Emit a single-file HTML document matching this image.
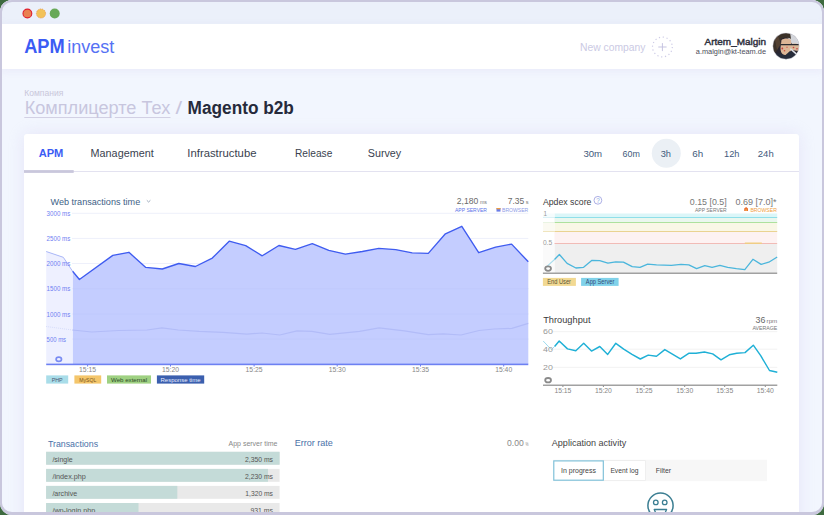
<!DOCTYPE html>
<html><head><meta charset="utf-8">
<style>
html,body{margin:0;padding:0;}
body{width:824px;height:515px;overflow:hidden;background:#3d6a3f;position:relative;font-family:"Liberation Sans", sans-serif;}
#win{position:absolute;left:0;top:0;width:824px;height:515px;border-radius:12px;overflow:hidden;background:#f2f6fe;}
#frame{position:absolute;left:0;top:0;width:824px;height:515px;box-sizing:border-box;border:2px solid #c9c7dd;border-bottom-width:3px;border-radius:12px;}
.abs{position:absolute;}
svg{position:absolute;left:0;top:0;}
svg text{font-family:"Liberation Sans", sans-serif;}
</style></head><body>
<div id="win">
  <div class="abs" style="left:0;top:0;width:824px;height:24px;background:#ebf0fa;"></div>
  <div class="abs" style="left:0;top:24px;width:824px;height:45px;background:#fff;box-shadow:0 2px 8px rgba(212,204,236,.28);"></div>
  <div class="abs" style="left:24px;top:134px;width:775px;height:400px;background:#fff;border-radius:3px;box-shadow:0 0 16px rgba(212,204,238,.42);"></div>
  <svg width="824" height="515" viewBox="0 0 824 515">
<circle cx="27.4" cy="13.5" r="4.4" fill="#e98050" stroke="#e01e2c" stroke-width="1.1"/>
<circle cx="41" cy="13.5" r="4.6" fill="#f2c258" stroke="#e98a3a" stroke-width="0.8" stroke-dasharray="1 1.2"/>
<circle cx="54.7" cy="13.5" r="5" fill="#68a957"/>
<circle cx="662.4" cy="47" r="9.9" fill="none" stroke="#cdcbe6" stroke-width="1.2" stroke-dasharray="1.2 2.69"/>
<path d="M662.4 43.1V51.1M658.3 47H666.6" stroke="#c3c1df" stroke-width="0.95"/>
<defs><clipPath id="av"><circle cx="786" cy="46.1" r="13.1"/></clipPath></defs>
<g clip-path="url(#av)"><rect x="772" y="32" width="28" height="28" fill="#2a2630"/><path d="M786 32H800V46L792 44L788 38Z" fill="#d3d5da"/><path d="M772 32H790L791 39C788 37 784 37 781 39L779 46L776 52L772 54Z" fill="#3b3128"/><path d="M775 40L778 36L781 44L777 50Z" fill="#5a4634" opacity="0.8"/><path d="M781.5 40C784 38 789 38 791 40L791.5 48C791 53 788 55 785 55C782 55 780.5 52 780.5 48Z" fill="#dcb596"/><path d="M790 44.5C793 43 797 43 799.5 45V50.5C796 51 792 50.5 790 49Z" fill="#d9b898"/><path d="M780.5 44.6H799" stroke="#2b2b30" stroke-width="1.1"/><circle cx="782.3" cy="48.5" r="0.9" fill="#c84040"/><circle cx="784.5" cy="50.8" r="0.8" fill="#c85040"/><circle cx="793.5" cy="47.5" r="0.8" fill="#c84040"/><circle cx="797" cy="48.8" r="0.8" fill="#c84040"/><circle cx="787" cy="47.2" r="0.7" fill="#d06050"/><path d="M772 60V55C776 52 781 53 785 55.5L790 51L799 55V60Z" fill="#262b3a"/><path d="M790.3 48.8L796.8 54.4" stroke="#dfe2ea" stroke-width="1.5"/></g>
<circle cx="786" cy="46.1" r="13.3" fill="none" stroke="#e6e6ee" stroke-width="0.6"/>
<path d="M24.3 117.5H111.3M114.8 117.5H170.5" stroke="#d2d0e4" stroke-width="1"/>
<rect x="24" y="171" width="775" height="1" fill="#e3e2f0"/>
<rect x="24" y="170.1" width="49.7" height="2.8" fill="#c9c7dc"/>
<circle cx="666.3" cy="153.3" r="14.5" fill="#ebf0f5"/>
<path d="M72 213.3H528.3" stroke="#eef0fb" stroke-width="1"/>
<path d="M72 238.4H528.3" stroke="#eef0fb" stroke-width="1"/>
<path d="M72 263.5H528.3" stroke="#eef0fb" stroke-width="1"/>
<path d="M72 288.7H528.3" stroke="#eef0fb" stroke-width="1"/>
<path d="M72 314.0H528.3" stroke="#eef0fb" stroke-width="1"/>
<path d="M72 339.1H528.3" stroke="#eef0fb" stroke-width="1"/>
<polygon points="72.6,271.3 79.4,279.5 112.8,255.4 128.9,252.3 145.8,267.4 162.3,269.0 178.8,263.5 195.4,266.5 212.3,258.1 229.2,241.2 245.7,245.7 262.2,255.8 278.9,245.5 295.4,249.4 312.3,243.7 328.8,250.3 345.4,254.2 362.3,251.5 378.8,248.4 395.7,249.6 412.2,252.9 428.3,253.4 445.4,233.8 461.8,226.3 478.7,252.7 495.6,247.1 511.6,244.1 528.3,261.8 528.3,364.0 72.6,364.0" fill="#c4cdff"/>
<polygon points="46.2,251.5 63.3,257.3 72.6,271.3 72.6,364.0 46.2,364.0" fill="#eef0ff"/>
<polyline points="46.2,251.5 63.3,257.3 72.6,271.3" fill="none" stroke="#a9b6f7" stroke-width="1"/>
<path d="M72.6 288.7H528.3" stroke="#b8c2fa" stroke-width="0.8" opacity="0.35"/>
<path d="M72.6 314.0H528.3" stroke="#b8c2fa" stroke-width="0.8" opacity="0.35"/>
<path d="M72.6 339.1H528.3" stroke="#b8c2fa" stroke-width="0.8" opacity="0.35"/>
<polyline points="72.6,271.3 79.4,279.5 112.8,255.4 128.9,252.3 145.8,267.4 162.3,269.0 178.8,263.5 195.4,266.5 212.3,258.1 229.2,241.2 245.7,245.7 262.2,255.8 278.9,245.5 295.4,249.4 312.3,243.7 328.8,250.3 345.4,254.2 362.3,251.5 378.8,248.4 395.7,249.6 412.2,252.9 428.3,253.4 445.4,233.8 461.8,226.3 478.7,252.7 495.6,247.1 511.6,244.1 528.3,261.8" fill="none" stroke="#3f5cf0" stroke-width="1.35" stroke-linejoin="round"/>
<polyline points="46.2,326.5 72.4,330.0" fill="none" stroke="#d6dcfb" stroke-width="1" stroke-dasharray="1 1"/>
<polyline points="72.4,330.0 91.8,332.0 118.6,330.5 147.0,330.0 162.0,327.9 178.3,330.0 199.2,331.4 223.0,332.3 247.0,334.1 262.0,333.0 279.8,335.0 297.0,330.8 311.9,331.4 329.8,334.4 359.6,331.4 379.0,327.8 404.4,330.8 428.3,334.7 443.2,333.8 461.1,335.0 479.0,330.5 494.0,329.0 511.9,328.4 528.3,323.4" fill="none" stroke="#b2bcf8" stroke-width="1.2"/>
<rect x="46.2" y="363.6" width="482.1" height="1.6" fill="#6d80f2"/>
<rect x="87.1" y="365" width="1" height="1.5" fill="#6d80f2"/>
<rect x="170.0" y="365" width="1" height="1.5" fill="#6d80f2"/>
<rect x="253.6" y="365" width="1" height="1.5" fill="#6d80f2"/>
<rect x="336.7" y="365" width="1" height="1.5" fill="#6d80f2"/>
<rect x="420.0" y="365" width="1" height="1.5" fill="#6d80f2"/>
<rect x="503.2" y="365" width="1" height="1.5" fill="#6d80f2"/>
<ellipse cx="58.8" cy="359.3" rx="2.7" ry="2.1" fill="none" stroke="#7a8cf2" stroke-width="1.7"/>
<rect x="46.2" y="375.4" width="22" height="8.2" fill="#a9dde9"/>
<rect x="74.4" y="375.4" width="26.8" height="8.2" fill="#f4c66b"/>
<rect x="107" y="375.4" width="44" height="8.2" fill="#9fd182"/>
<rect x="156.9" y="375.4" width="47.3" height="8.2" fill="#3b5fae"/>
<rect x="496.5" y="208" width="4" height="3.6" fill="#6a7de8"/><rect x="496.5" y="208" width="4" height="1.3" fill="#f0a040"/>
<path d="M146.8 200.3L148.6 202L150.4 200.3" fill="none" stroke="#8797ac" stroke-width="0.8"/>
<rect x="554.5" y="213.5" width="222.7" height="3.7" fill="#dbf6f8"/>
<rect x="554.5" y="217.1" width="222.7" height="0.9" fill="#78d8e6"/>
<rect x="554.5" y="217.9" width="222.7" height="4.3" fill="#eaf7ee"/>
<rect x="554.5" y="222.1" width="222.7" height="0.9" fill="#8fd77e"/>
<rect x="554.5" y="222.8" width="222.7" height="8.6" fill="#f9f7e6"/>
<rect x="554.5" y="231.1" width="222.7" height="0.9" fill="#e3c66a"/>
<rect x="554.5" y="231.8" width="222.7" height="11.3" fill="#fdf2f2"/>
<rect x="554.5" y="243.1" width="222.7" height="0.9" fill="#f0b4ae"/>
<rect x="554.5" y="244" width="222.7" height="28.8" fill="#efefef"/>
<rect x="543" y="213.5" width="11.5" height="3.6" fill="#f5fcfd"/>
<rect x="543" y="217.1" width="11.5" height="0.9" fill="#d6f0f5"/>
<rect x="543" y="222.1" width="11.5" height="0.9" fill="#e2f2dc"/>
<rect x="543" y="231.1" width="11.5" height="0.9" fill="#eee0b0"/>
<rect x="543" y="222.8" width="11.5" height="8.3" fill="#fbfaf2"/>
<rect x="543" y="244" width="11.5" height="28.7" fill="#fafafa"/>
<rect x="744.8" y="242.5" width="17" height="1.4" fill="#f0cf80"/>
<rect x="542.9" y="272.6" width="234.3" height="1.2" fill="#8a8a8a"/>
<polyline points="546.7,266.7 554.5,259.5" fill="none" stroke="#a8dcec" stroke-width="1.1"/>
<polyline points="554.5,259.5 559.4,254.5 567.1,263.4 575.9,268.0 583.6,267.3 592.0,260.3 599.7,260.7 607.9,263.2 615.7,261.8 623.4,262.2 632.2,266.7 640.0,267.3 647.7,264.2 656.5,264.8 671.4,265.3 681.0,264.4 688.8,264.8 696.6,268.6 704.8,265.7 712.1,267.3 719.9,265.3 727.7,267.3 736.4,268.6 744.8,269.6 752.9,259.3 761.1,264.4 768.8,262.2 777.2,257.0" fill="none" stroke="#4bb6dc" stroke-width="1.3" stroke-linejoin="round"/>
<ellipse cx="548.1" cy="268.6" rx="2.9" ry="2.2" fill="none" stroke="#8a8a8a" stroke-width="1.8"/>
<rect x="542.9" y="277.9" width="33" height="8" fill="#f2d992"/>
<rect x="581.1" y="277.9" width="37.5" height="8" fill="#80d2ea"/>
<circle cx="597.9" cy="200.3" r="3.9" fill="none" stroke="#a3a6e2" stroke-width="0.9"/>
<path d="M744.2 208.6L746.1 206.9L748 208.6V210.9H744.2Z" fill="#ec7034"/><rect x="745.5" y="209.3" width="1.2" height="1.6" fill="#f5c050"/>
<path d="M553 331.7H777.3" stroke="#f2f2f2" stroke-width="1"/>
<path d="M553 349.2H777.3" stroke="#f2f2f2" stroke-width="1"/>
<path d="M553 367.3H777.3" stroke="#f2f2f2" stroke-width="1"/>
<rect x="543" y="384.6" width="234.3" height="1.2" fill="#8a8a8a"/>
<rect x="562.4" y="385.5" width="1" height="1.5" fill="#8a8a8a"/>
<rect x="602.9" y="385.5" width="1" height="1.5" fill="#8a8a8a"/>
<rect x="643.5" y="385.5" width="1" height="1.5" fill="#8a8a8a"/>
<rect x="684.2" y="385.5" width="1" height="1.5" fill="#8a8a8a"/>
<rect x="724.2" y="385.5" width="1" height="1.5" fill="#8a8a8a"/>
<rect x="764.8" y="385.5" width="1" height="1.5" fill="#8a8a8a"/>
<ellipse cx="548.1" cy="380.2" rx="2.9" ry="2.2" fill="none" stroke="#8a8a8a" stroke-width="1.8"/>
<polyline points="543.2,341.0 551.3,349.6 554.6,346.5" fill="none" stroke="#9fdcef" stroke-width="1"/>
<polyline points="554.6,346.5 559.2,341.0 567.5,348.9 575.8,350.7 583.7,343.3 591.5,351.1 599.8,346.5 607.7,354.4 615.8,343.3 623.7,349.2 632.0,354.4 640.3,359.0 648.2,355.1 656.5,356.3 664.8,349.6 680.4,358.9 688.7,353.3 696.1,353.3 704.4,352.0 712.7,353.9 721.0,359.8 729.3,354.8 736.7,353.3 745.0,352.6 753.3,345.2 760.7,355.7 769.5,370.5 777.3,372.3" fill="none" stroke="#1fb0d6" stroke-width="1.45" stroke-linejoin="round"/>
<rect x="46.1" y="451.8" width="233.5" height="12.9" fill="#e9e9e9"/>
<rect x="46.1" y="451.8" width="233.5" height="12.9" fill="#c4dbd8"/>
<rect x="46.1" y="468.9" width="233.5" height="12.9" fill="#e9e9e9"/>
<rect x="46.1" y="468.9" width="221.9" height="12.9" fill="#c4dbd8"/>
<rect x="46.1" y="485.9" width="233.5" height="12.9" fill="#e9e9e9"/>
<rect x="46.1" y="485.9" width="131.2" height="12.9" fill="#c4dbd8"/>
<rect x="46.1" y="503.0" width="233.5" height="12.9" fill="#e9e9e9"/>
<rect x="46.1" y="503.0" width="92.4" height="12.9" fill="#c4dbd8"/>
<rect x="553" y="459.7" width="213.9" height="21.5" fill="#f7f7f7"/>
<rect x="603.3" y="460.6" width="42.3" height="19.9" fill="#fff" stroke="#ececec" stroke-width="0.8"/>
<rect x="553.8" y="460.9" width="49.5" height="19.3" fill="#fff" stroke="#7cbfd8" stroke-width="1.15"/>
<circle cx="660.5" cy="505.6" r="12.6" fill="#fff" stroke="#3b7e92" stroke-width="1.5"/>
<circle cx="655.8" cy="502.4" r="2.3" fill="none" stroke="#3b7e92" stroke-width="1.3"/>
<circle cx="664.7" cy="502.4" r="2.3" fill="none" stroke="#3b7e92" stroke-width="1.3"/>
<path d="M654.2 509.5H666.6L664.8 513.5H656Z" fill="none" stroke="#3b7e92" stroke-width="1.3" stroke-linejoin="round"/>
<text x="24.20" y="52.80" font-size="19.33" fill="#3b5cf4" font-weight="bold" textLength="40.50" lengthAdjust="spacingAndGlyphs" >APM</text>
<text x="67.20" y="52.80" font-size="17.95" fill="#5672f4" textLength="47.20" lengthAdjust="spacingAndGlyphs" >invest</text>
<text x="580.00" y="51.20" font-size="11.63" fill="#cbcae4" textLength="65.40" lengthAdjust="spacingAndGlyphs" >New company</text>
<text x="704.60" y="44.90" font-size="9.88" fill="#30323e" textLength="61.40" lengthAdjust="spacingAndGlyphs" stroke="#30323e" stroke-width="0.45">Artem_Malgin</text>
<text x="695.80" y="53.90" font-size="7.20" fill="#4a4c58" textLength="70.20" lengthAdjust="spacingAndGlyphs" >a.malgin@kt-team.de</text>
<text x="24.20" y="95.50" font-size="8.72" fill="#c9c7da" textLength="39.20" lengthAdjust="spacingAndGlyphs" >Компания</text>
<text x="24.70" y="113.80" font-size="18.90" fill="#c8c6de" textLength="145.60" lengthAdjust="spacingAndGlyphs" >Комплицерте Тех</text>
<text x="175.40" y="113.80" font-size="18.90" fill="#c8c6de" textLength="6.60" lengthAdjust="spacingAndGlyphs" >/</text>
<text x="187.60" y="114.20" font-size="18.90" fill="#262a3b" font-weight="bold" textLength="106.30" lengthAdjust="spacingAndGlyphs" >Magento b2b</text>
<text x="38.70" y="156.70" font-size="11.05" fill="#3b5cf4" font-weight="bold" textLength="24.70" lengthAdjust="spacingAndGlyphs" >APM</text>
<text x="90.60" y="156.70" font-size="11.05" fill="#3a3f4f" textLength="63.10" lengthAdjust="spacingAndGlyphs" >Management</text>
<text x="187.30" y="156.70" font-size="11.05" fill="#3a3f4f" textLength="69.20" lengthAdjust="spacingAndGlyphs" >Infrastructube</text>
<text x="295.00" y="156.70" font-size="11.05" fill="#3a3f4f" textLength="37.30" lengthAdjust="spacingAndGlyphs" >Release</text>
<text x="367.80" y="156.70" font-size="11.05" fill="#3a3f4f" textLength="33.40" lengthAdjust="spacingAndGlyphs" >Survey</text>
<text x="583.40" y="156.80" font-size="9.74" fill="#3f5a7c" textLength="18.70" lengthAdjust="spacingAndGlyphs" >30m</text>
<text x="622.50" y="156.80" font-size="9.74" fill="#3f5a7c" textLength="17.30" lengthAdjust="spacingAndGlyphs" >60m</text>
<text x="660.70" y="156.80" font-size="9.74" fill="#3f5a7c" textLength="10.30" lengthAdjust="spacingAndGlyphs" >3h</text>
<text x="692.20" y="156.80" font-size="9.74" fill="#3f5a7c" textLength="10.90" lengthAdjust="spacingAndGlyphs" >6h</text>
<text x="724.00" y="156.80" font-size="9.74" fill="#3f5a7c" textLength="15.40" lengthAdjust="spacingAndGlyphs" >12h</text>
<text x="757.80" y="156.80" font-size="9.74" fill="#3f5a7c" textLength="15.90" lengthAdjust="spacingAndGlyphs" >24h</text>
<text x="50.50" y="204.60" font-size="9.45" fill="#3e5f86" textLength="89.70" lengthAdjust="spacingAndGlyphs" >Web transactions time</text>
<text x="46.60" y="215.80" font-size="7.00" fill="#6f80f2" textLength="23.70" lengthAdjust="spacingAndGlyphs" >3000 ms</text>
<text x="46.60" y="241.00" font-size="7.00" fill="#6f80f2" textLength="23.70" lengthAdjust="spacingAndGlyphs" >2500 ms</text>
<text x="46.60" y="266.10" font-size="7.00" fill="#6f80f2" textLength="23.70" lengthAdjust="spacingAndGlyphs" >2000 ms</text>
<text x="46.60" y="291.30" font-size="7.00" fill="#6f80f2" textLength="23.70" lengthAdjust="spacingAndGlyphs" >1500 ms</text>
<text x="46.60" y="316.80" font-size="7.00" fill="#6f80f2" textLength="23.70" lengthAdjust="spacingAndGlyphs" >1000 ms</text>
<text x="46.60" y="341.60" font-size="7.00" fill="#6f80f2" textLength="19.50" lengthAdjust="spacingAndGlyphs" >500 ms</text>
<text x="456.80" y="204.40" font-size="9.45" fill="#6a6a6a" textLength="21.50" lengthAdjust="spacingAndGlyphs" >2,180</text>
<text x="480.00" y="204.40" font-size="6.00" fill="#777" textLength="7.00" lengthAdjust="spacingAndGlyphs" >ms</text>
<text x="507.80" y="204.40" font-size="9.45" fill="#6a6a6a" textLength="16.40" lengthAdjust="spacingAndGlyphs" >7.35</text>
<text x="525.80" y="204.40" font-size="6.00" fill="#777" textLength="2.80" lengthAdjust="spacingAndGlyphs" >s</text>
<text x="455.00" y="211.50" font-size="5.60" fill="#5b73e8" textLength="32.00" lengthAdjust="spacingAndGlyphs" >APP SERVER</text>
<text x="502.00" y="211.50" font-size="5.60" fill="#8d9ae6" textLength="26.30" lengthAdjust="spacingAndGlyphs" >BROWSER</text>
<text x="87.60" y="371.80" font-size="7.00" fill="#868686" text-anchor="middle" textLength="17.00" lengthAdjust="spacingAndGlyphs" >15:15</text>
<text x="170.50" y="371.80" font-size="7.00" fill="#868686" text-anchor="middle" textLength="17.00" lengthAdjust="spacingAndGlyphs" >15:20</text>
<text x="254.10" y="371.80" font-size="7.00" fill="#868686" text-anchor="middle" textLength="17.00" lengthAdjust="spacingAndGlyphs" >15:25</text>
<text x="337.20" y="371.80" font-size="7.00" fill="#868686" text-anchor="middle" textLength="17.00" lengthAdjust="spacingAndGlyphs" >15:30</text>
<text x="420.50" y="371.80" font-size="7.00" fill="#868686" text-anchor="middle" textLength="17.00" lengthAdjust="spacingAndGlyphs" >15:35</text>
<text x="503.70" y="371.80" font-size="7.00" fill="#868686" text-anchor="middle" textLength="17.00" lengthAdjust="spacingAndGlyphs" >15:40</text>
<text x="542.90" y="204.60" font-size="9.59" fill="#3a3a3a" textLength="48.50" lengthAdjust="spacingAndGlyphs" >Apdex score</text>
<text x="689.80" y="204.60" font-size="9.59" fill="#777" textLength="36.90" lengthAdjust="spacingAndGlyphs" >0.15 [0.5]</text>
<text x="735.40" y="204.60" font-size="9.59" fill="#777" textLength="41.20" lengthAdjust="spacingAndGlyphs" >0.69 [7.0]*</text>
<text x="695.00" y="211.50" font-size="5.60" fill="#777" textLength="31.70" lengthAdjust="spacingAndGlyphs" >APP SERVER</text>
<text x="750.40" y="211.50" font-size="5.60" fill="#f0a040" textLength="26.50" lengthAdjust="spacingAndGlyphs" >BROWSER</text>
<text x="543.60" y="215.70" font-size="6.30" fill="#999" >1</text>
<text x="542.90" y="245.00" font-size="6.30" fill="#999" textLength="9.30" lengthAdjust="spacingAndGlyphs" >0.5</text>
<text x="543.20" y="322.90" font-size="9.59" fill="#3a3a3a" textLength="47.30" lengthAdjust="spacingAndGlyphs" >Throughput</text>
<text x="755.50" y="322.90" font-size="9.30" fill="#666" textLength="9.80" lengthAdjust="spacingAndGlyphs" >36</text>
<text x="766.60" y="322.90" font-size="5.60" fill="#777" textLength="10.70" lengthAdjust="spacingAndGlyphs" >rpm</text>
<text x="752.40" y="330.20" font-size="5.60" fill="#777" textLength="24.90" lengthAdjust="spacingAndGlyphs" >AVERAGE</text>
<text x="543.00" y="334.00" font-size="6.50" fill="#999" textLength="9.80" lengthAdjust="spacingAndGlyphs" >60</text>
<text x="543.00" y="351.50" font-size="6.50" fill="#999" textLength="9.80" lengthAdjust="spacingAndGlyphs" >40</text>
<text x="543.00" y="369.60" font-size="6.50" fill="#999" textLength="9.80" lengthAdjust="spacingAndGlyphs" >20</text>
<text x="562.90" y="392.80" font-size="7.00" fill="#868686" text-anchor="middle" textLength="17.00" lengthAdjust="spacingAndGlyphs" >15:15</text>
<text x="603.40" y="392.80" font-size="7.00" fill="#868686" text-anchor="middle" textLength="17.00" lengthAdjust="spacingAndGlyphs" >15:20</text>
<text x="644.00" y="392.80" font-size="7.00" fill="#868686" text-anchor="middle" textLength="17.00" lengthAdjust="spacingAndGlyphs" >15:25</text>
<text x="684.70" y="392.80" font-size="7.00" fill="#868686" text-anchor="middle" textLength="17.00" lengthAdjust="spacingAndGlyphs" >15:30</text>
<text x="724.70" y="392.80" font-size="7.00" fill="#868686" text-anchor="middle" textLength="17.00" lengthAdjust="spacingAndGlyphs" >15:35</text>
<text x="765.30" y="392.80" font-size="7.00" fill="#868686" text-anchor="middle" textLength="17.00" lengthAdjust="spacingAndGlyphs" >15:40</text>
<text x="47.90" y="446.50" font-size="9.45" fill="#4a72a8" textLength="50.20" lengthAdjust="spacingAndGlyphs" >Transactions</text>
<text x="228.50" y="445.50" font-size="7.60" fill="#888" textLength="49.00" lengthAdjust="spacingAndGlyphs" >App server time</text>
<text x="294.70" y="445.80" font-size="9.16" fill="#4a72a8" textLength="38.20" lengthAdjust="spacingAndGlyphs" >Error rate</text>
<text x="507.00" y="445.70" font-size="9.88" fill="#888" textLength="16.70" lengthAdjust="spacingAndGlyphs" >0.00</text>
<text x="525.60" y="445.70" font-size="5.00" fill="#888" textLength="3.00" lengthAdjust="spacingAndGlyphs" >%</text>
<text x="551.80" y="445.60" font-size="9.16" fill="#444" textLength="74.40" lengthAdjust="spacingAndGlyphs" >Application activity</text>
<text x="57.20" y="381.60" font-size="6.20" fill="#4a5870" text-anchor="middle" textLength="11.00" lengthAdjust="spacingAndGlyphs" >PHP</text>
<text x="87.80" y="381.60" font-size="6.20" fill="#7a5520" text-anchor="middle" textLength="17.00" lengthAdjust="spacingAndGlyphs" >MySQL</text>
<text x="129.00" y="381.60" font-size="6.20" fill="#2c4a28" text-anchor="middle" textLength="36.00" lengthAdjust="spacingAndGlyphs" >Web external</text>
<text x="180.50" y="381.60" font-size="6.20" fill="#e8ecff" text-anchor="middle" textLength="40.00" lengthAdjust="spacingAndGlyphs" >Response time</text>
<text x="559.10" y="284.20" font-size="6.90" fill="#5a5638" text-anchor="middle" textLength="23.70" lengthAdjust="spacingAndGlyphs" >End User</text>
<text x="600.10" y="284.20" font-size="6.90" fill="#354a78" text-anchor="middle" textLength="28.50" lengthAdjust="spacingAndGlyphs" >App Server</text>
<text x="597.90" y="202.70" font-size="6.30" fill="#86a8e0" text-anchor="middle" >?</text>
<text x="52.40" y="461.70" font-size="7.80" fill="#555" textLength="20.30" lengthAdjust="spacingAndGlyphs" >/single</text>
<text x="273.00" y="461.70" font-size="7.80" fill="#555" text-anchor="end" textLength="28.00" lengthAdjust="spacingAndGlyphs" >2,350 ms</text>
<text x="52.40" y="478.75" font-size="7.80" fill="#555" textLength="33.50" lengthAdjust="spacingAndGlyphs" >/index.php</text>
<text x="273.00" y="478.75" font-size="7.80" fill="#555" text-anchor="end" textLength="28.00" lengthAdjust="spacingAndGlyphs" >2,230 ms</text>
<text x="52.40" y="495.80" font-size="7.80" fill="#555" textLength="24.70" lengthAdjust="spacingAndGlyphs" >/archive</text>
<text x="273.00" y="495.80" font-size="7.80" fill="#555" text-anchor="end" textLength="27.70" lengthAdjust="spacingAndGlyphs" >1,320 ms</text>
<text x="52.40" y="512.85" font-size="7.80" fill="#555" textLength="42.90" lengthAdjust="spacingAndGlyphs" >/wp-login.php</text>
<text x="273.00" y="512.85" font-size="7.80" fill="#555" text-anchor="end" textLength="22.60" lengthAdjust="spacingAndGlyphs" >931 ms</text>
<text x="578.50" y="473.30" font-size="7.60" fill="#444" text-anchor="middle" textLength="35.00" lengthAdjust="spacingAndGlyphs" >In progress</text>
<text x="624.40" y="473.30" font-size="7.60" fill="#444" text-anchor="middle" textLength="28.00" lengthAdjust="spacingAndGlyphs" >Event log</text>
<text x="663.40" y="473.30" font-size="7.60" fill="#444" text-anchor="middle" textLength="15.20" lengthAdjust="spacingAndGlyphs" >Filter</text>
  </svg>
</div>
<div id="frame"></div>
</body></html>
